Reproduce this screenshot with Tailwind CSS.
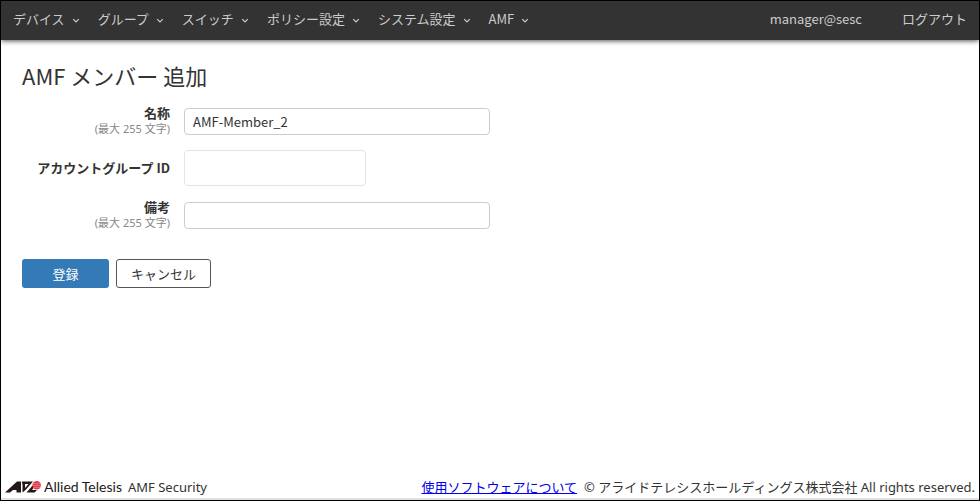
<!DOCTYPE html>
<html lang="ja">
<head>
<meta charset="utf-8">
<title>AMF Security</title>
<script src="https://cdn.jsdelivr.net/npm/@tailwindcss/browser@4"></script>
</head>
<body class="flex min-h-screen flex-col border border-black bg-white font-['Noto_Sans_CJK_JP',sans-serif] text-[13px] leading-5 text-[#333]">
<svg class="hidden"><symbol id="chevron" viewBox="0 0 8 6"><path d="M1.2 1.2 4 4 6.8 1.2" fill="none" stroke="currentColor" stroke-width="1.2"/></symbol></svg>
<header class="flex h-[39px] items-center bg-[#333] px-3 pb-1 text-[#ccc] shadow-[0_1px_5px_#000000b0]">
  <nav class="flex">
    <button type="button" class="flex items-center gap-[7px] pr-[18px]">デバイス<svg class="mt-1 h-[6px] w-2"><use href="#chevron"/></svg></button>
    <button type="button" class="flex items-center gap-[7px] pr-[18px]">グループ<svg class="mt-1 h-[6px] w-2"><use href="#chevron"/></svg></button>
    <button type="button" class="flex items-center gap-[7px] pr-[18px]">スイッチ<svg class="mt-1 h-[6px] w-2"><use href="#chevron"/></svg></button>
    <button type="button" class="flex items-center gap-[7px] pr-[18px]">ポリシー設定<svg class="mt-1 h-[6px] w-2"><use href="#chevron"/></svg></button>
    <button type="button" class="flex items-center gap-[7px] pr-[18px]">システム設定<svg class="mt-1 h-[6px] w-2"><use href="#chevron"/></svg></button>
    <button type="button" class="flex items-center gap-[7px] pr-[18px]">AMF<svg class="mt-1 h-[6px] w-2"><use href="#chevron"/></svg></button>
  </nav>
  <span class="ml-auto mr-10">manager@sesc</span>
  <a href="#">ログアウト</a>
</header>
<main class="flex-1 px-[21px] pt-[19px]">
  <h1 class="text-[22px] leading-8">AMF メンバー 追加</h1>
  <form>
    <div class="mt-[15px] grid grid-cols-[148px_1fr] items-center gap-x-[14px] gap-y-[14px]">
      <label for="name" class="text-right font-['Noto_Sans','Noto_Sans_CJK_JP',sans-serif] leading-[15px]"><b>名称</b><span class="block text-[11px] text-[#888]">(最大 255 文字)</span></label>
      <input id="name" type="text" value="AMF-Member_2" class="h-[27px] w-[306px] rounded border border-[#ccc] px-2">
      <label for="group" class="text-right font-bold">アカウントグループ ID</label>
      <input id="group" type="text" class="h-9 w-[182px] rounded border border-[#e3e3e8] px-2">
      <label for="note" class="text-right font-['Noto_Sans','Noto_Sans_CJK_JP',sans-serif] leading-[15px]"><b>備考</b><span class="block text-[11px] text-[#888]">(最大 255 文字)</span></label>
      <input id="note" type="text" class="h-[27px] w-[306px] rounded border border-[#ccc] px-2">
    </div>
    <div class="mt-[29px] flex gap-[7px]">
      <button type="submit" class="h-[29px] w-[87px] rounded-[3px] bg-[#337ab7] text-white">登録</button>
      <button type="button" class="h-[29px] w-[95px] rounded-[3px] border border-[#555]">キャンセル</button>
    </div>
  </form>
</main>
<footer class="flex items-center border-b-2 border-[#e4e0de] px-1 pb-px font-['Noto_Sans','Noto_Sans_CJK_JP',sans-serif]">
  <svg class="h-[14px] w-9 shrink-0" viewBox="0 0 36 14" role="img" aria-label="Allied Telesis">
    <path d="M0 12.5 12 1.5h4v11h-4.5V10H8l-3 2.5z" fill="#231815"/>
    <path d="M16.8 1.5H28L20.5 10l-3 2.5V5z" fill="#231815"/>
    <path d="M28 5 21.5 12.5h8l2.5-2.5h-5l3-4z" fill="#231815"/>
    <path d="M20 4h3.5L20 8z" fill="#fff"/>
    <circle cx="31.7" cy="5.2" r="4.2" fill="#e6394d"/>
    <path d="M27.5 3.6h8.4M27.5 5.6h8.4M28 7.6h7.5" stroke="#f3a0a8" stroke-width=".5"/>
  </svg>
  <span class="ml-[3px] font-[Lato,sans-serif] text-sm leading-5 text-[#231815]">Allied Telesis</span>
  <span class="ml-[6px]">AMF Security</span>
  <a href="#" class="ml-auto text-[#0000ee] underline">使用ソフトウェアについて</a>
  <span class="ml-[7px]">© アライドテレシスホールディングス株式会社 All rights reserved.</span>
</footer>
</body>
</html>
